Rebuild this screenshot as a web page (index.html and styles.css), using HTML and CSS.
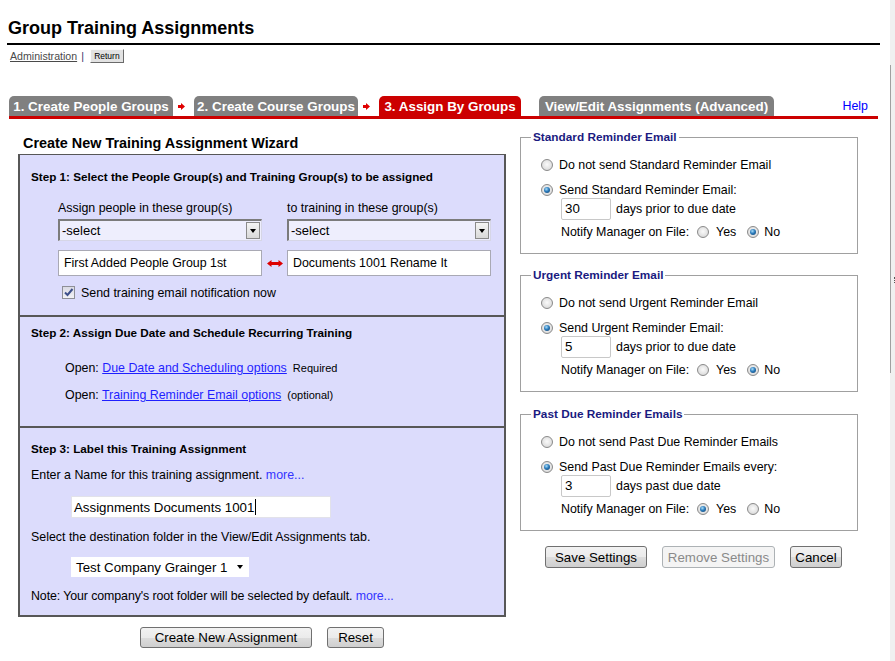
FILE: index.html
```html
<!DOCTYPE html>
<html>
<head>
<meta charset="utf-8">
<title>Group Training Assignments</title>
<link rel="stylesheet" href="styles.css">
</head>
<body>
<div class="main">
  <h1 class="title">Group Training Assignments</h1>
  <div class="admin">
    <a class="admin-link">Administration</a><span class="sep">|</span>
    <button class="return">Return</button>
  </div>

  <div class="tabs">
    <div class="tab w1">1. Create People Groups</div>
    <svg class="arrow" width="7" height="7" viewBox="0 0 7 7"><path d="M0 2h3V0l4 3.5L3 7V5H0z" fill="#e00000"/></svg>
    <div class="tab w2">2. Create Course Groups</div>
    <svg class="arrow" width="7" height="7" viewBox="0 0 7 7"><path d="M0 2h3V0l4 3.5L3 7V5H0z" fill="#e00000"/></svg>
    <div class="tab active w3">3. Assign By Groups</div>
    <div class="tab w4">View/Edit Assignments (Advanced)</div>
    <a class="help">Help</a>
  </div>

  <div class="content">
    <div class="left">
      <div class="wiz-title">Create New Training Assignment Wizard</div>
      <div class="box">
        <div class="step step1">
          <div class="step-title">Step 1: Select the People Group(s) and Training Group(s) to be assigned</div>
          <div class="pair pair-labels">
            <div>Assign people in these group(s)</div><div></div><div>to training in these group(s)</div>
          </div>
          <div class="pair pair-selects">
            <div class="sel"><span>-select</span><span class="sel-btn"><span class="tri"></span></span></div>
            <div></div>
            <div class="sel"><span>-select</span><span class="sel-btn"><span class="tri"></span></span></div>
          </div>
          <div class="pair pair-fields">
            <div class="field">First Added People Group 1st</div>
            <div class="dbl"><svg width="16" height="7" viewBox="0 0 16 7"><path d="M0 3.5L4.5 0v2h7V0L16 3.5 11.5 7V5h-7v2z" fill="#dd0000"/></svg></div>
            <div class="field">Documents 1001 Rename It</div>
          </div>
          <div class="chk-row">
            <span class="chk"><svg width="11" height="11" viewBox="0 0 11 11"><path d="M2 5.5l2.5 2.5L9.5 2" fill="none" stroke="#3d4f8a" stroke-width="2"/></svg></span>
            <span class="chk-text">Send training email notification now</span>
          </div>
        </div>

        <div class="step step2">
          <div class="step-title">Step 2: Assign Due Date and Schedule Recurring Training</div>
          <div class="open-row first">Open: <a class="link">Due Date and Scheduling options</a><span class="small">Required</span></div>
          <div class="open-row">Open: <a class="link">Training Reminder Email options</a><span class="small">(optional)</span></div>
        </div>

        <div class="step step3">
          <div class="step-title">Step 3: Label this Training Assignment</div>
          <div class="txt">Enter a Name for this training assignment. <a class="more">more...</a></div>
          <div class="name-input"><span>Assignments Documents 1001</span><span class="caret"></span></div>
          <div class="txt">Select the destination folder in the View/Edit Assignments tab.</div>
          <div class="dest"><span>Test Company Grainger 1</span><span class="tri"></span></div>
          <div class="txt note">Note: Your company's root folder will be selected by default. <a class="more">more...</a></div>
        </div>
      </div>
      <div class="btn-row">
        <button class="btn b-create">Create New Assignment</button>
        <button class="btn b-reset">Reset</button>
      </div>
    </div>

    <div class="right">
      <fieldset class="fs">
        <legend>Standard Reminder Email</legend>
        <div class="opt opt1"><span class="radio"></span><span>Do not send Standard Reminder Email</span></div>
        <div class="opt opt2"><span class="radio on"></span><span>Send Standard Reminder Email:</span></div>
        <div class="days"><span class="num">30</span><span>days prior to due date</span></div>
        <div class="notify"><span>Notify Manager on File:</span><span class="radio r-yes"></span><span class="r-lbl">Yes</span><span class="radio on r-no"></span><span class="r-lbl2">No</span></div>
      </fieldset>
      <fieldset class="fs fs2">
        <legend>Urgent Reminder Email</legend>
        <div class="opt opt1"><span class="radio"></span><span>Do not send Urgent Reminder Email</span></div>
        <div class="opt opt2"><span class="radio on"></span><span>Send Urgent Reminder Email:</span></div>
        <div class="days"><span class="num">5</span><span>days prior to due date</span></div>
        <div class="notify"><span>Notify Manager on File:</span><span class="radio r-yes"></span><span class="r-lbl">Yes</span><span class="radio on r-no"></span><span class="r-lbl2">No</span></div>
      </fieldset>
      <fieldset class="fs fs3">
        <legend>Past Due Reminder Emails</legend>
        <div class="opt opt1"><span class="radio"></span><span>Do not send Past Due Reminder Emails</span></div>
        <div class="opt opt2"><span class="radio on"></span><span>Send Past Due Reminder Emails every:</span></div>
        <div class="days"><span class="num">3</span><span>days past due date</span></div>
        <div class="notify"><span>Notify Manager on File:</span><span class="radio on r-yes"></span><span class="r-lbl">Yes</span><span class="radio r-no"></span><span class="r-lbl2">No</span></div>
      </fieldset>
      <div class="rbtns">
        <button class="btn b-save">Save Settings</button>
        <button class="btn b-remove" disabled>Remove Settings</button>
        <button class="btn b-cancel">Cancel</button>
      </div>
    </div>
  </div>
</div>
<div class="edge">
  <div class="edge-line"><span class="grip"></span></div>
</div>
</body>
</html>
```
FILE: styles.css
```css
html, body {
  margin: 0;
  padding: 0;
}
body {
  display: flex;
  height: 661px;
  overflow: hidden;
  background: #fff;
  color: #000;
  font-family: "Liberation Sans", Arial, sans-serif;
  font-size: 12.4px;
}
.main {
  flex: none;
  width: 890px;
  padding-left: 7px;
  box-sizing: border-box;
}
.title {
  margin: 0;
  width: 873px;
  box-sizing: border-box;
  padding: 17px 0 4px 1px;
  font-size: 18px;
  line-height: 22px;
  font-weight: bold;
  border-bottom: 2px solid #000;
}
.admin {
  display: flex;
  align-items: center;
  height: 14px;
  margin-top: 4px;
  padding-left: 3px;
  font-size: 10.6px;
}
.admin-link {
  color: #4a4a4a;
  text-decoration: underline;
}
.sep {
  margin-left: 4px;
  color: #333366;
}
.return {
  margin-left: 6px;
  width: 34px;
  height: 14px;
  padding: 0;
  font-family: "Liberation Sans", Arial, sans-serif;
  font-size: 8.5px;
  color: #000;
  background: #e2e2e2;
  border: 1px solid;
  border-color: #fbfbfb #6a6a6a #6a6a6a #fbfbfb;
}
.tabs {
  display: flex;
  align-items: flex-end;
  margin: 33px 0 0 2px;
  width: 869px;
  height: 20px;
  border-bottom: 3px solid #cc0000;
}
.tab {
  height: 19px;
  padding-top: 1px;
  line-height: 19px;
  background: #808080;
  color: #fff;
  font-weight: bold;
  font-size: 13.4px;
  text-align: center;
  white-space: nowrap;
  border-radius: 5px 5px 0 0;
}
.w1 { width: 164px; }
.w2 { width: 164px; }
.w3 { width: 142px; }
.w4 { width: 235px; margin-left: 18px; }
.active { background: #cc0000; }
.arrow {
  align-self: center;
  margin: 1px 9px 0 5px;
}
.help {
  margin-left: auto;
  margin-right: 10px;
  color: #0000ff;
  line-height: 20px;
  padding-top: 1px;
}
.content {
  display: flex;
  align-items: flex-start;
  margin-top: 11px;
}
.left {
  width: 488px;
  margin-left: 11px;
}
.right {
  width: 338px;
  margin-left: 14px;
}
.wiz-title {
  margin: 5px 0 3px;
  padding-left: 5px;
  font-weight: bold;
  font-size: 14.4px;
  line-height: 16px;
}
.box {
  background: #dcdcfc;
  border: 2px solid #575757;
  border-top-width: 1px;
}
.step + .step {
  border-top: 2px solid #575757;
}
.step-title {
  font-weight: bold;
  font-size: 11.7px;
  line-height: 14px;
  padding-left: 11px;
}
.step1 { padding-bottom: 16px; }
.step1 .step-title { padding-top: 15px; }
.pair {
  display: grid;
  grid-template-columns: 204px 25px 204px;
  margin-left: 38px;
}
.pair-labels {
  margin-top: 17px;
  line-height: 14px;
}
.pair-selects { margin-top: 4px; }
.pair-fields { margin-top: 9px; }
.sel {
  height: 22px;
  box-sizing: border-box;
  border-style: solid;
  border-width: 2px 1px 1px 2px;
  border-color: #7b7b7b #d6d6e6 #d6d6e6 #7b7b7b;
  background: #eeeefd;
  display: flex;
  align-items: center;
  justify-content: space-between;
  padding-left: 2px;
  font-size: 13px;
}
.sel-btn {
  width: 14px;
  height: 17px;
  margin-right: 1px;
  box-sizing: border-box;
  border: 1px solid #8a8a8a;
  background: linear-gradient(#f4f4f4, #d9d9d9);
  display: flex;
  align-items: center;
  justify-content: center;
}
.tri {
  width: 0;
  height: 0;
  border-left: 3.5px solid transparent;
  border-right: 3.5px solid transparent;
  border-top: 4px solid #000;
}
.field {
  height: 26px;
  box-sizing: border-box;
  background: #fff;
  border: 1px solid #a9a9b4;
  padding-left: 5px;
  display: flex;
  align-items: center;
}
.dbl {
  display: flex;
  align-items: center;
  justify-content: center;
  padding-top: 1px;
}
.chk-row {
  display: flex;
  align-items: center;
  height: 13px;
  margin: 10px 0 0 42px;
}
.chk {
  width: 13px;
  height: 13px;
  box-sizing: border-box;
  border: 1px solid #8e8f96;
  background: linear-gradient(#dadae4, #f2f2f6);
  display: flex;
  align-items: center;
  justify-content: center;
}
.chk-text { margin-left: 6px; }
.step2 { padding-bottom: 24px; }
.step2 .step-title { padding-top: 9px; }
.open-row {
  margin: 13px 0 0 45px;
  line-height: 14px;
}
.open-row.first { margin-top: 21px; }
.link {
  color: #1f1fff;
  text-decoration: underline;
}
.small {
  font-size: 11px;
  margin-left: 6px;
}
.step3 { padding-bottom: 12px; }
.step3 .step-title { padding-top: 14px; }
.txt {
  padding-left: 11px;
  margin-top: 12px;
  line-height: 14px;
}
.note { letter-spacing: -0.1px; }
.more {
  color: #3333ff;
}
.name-input {
  margin: 14px 0 0 51px;
  width: 260px;
  height: 22px;
  box-sizing: border-box;
  background: #fff;
  border: 1px solid #e2e2ea;
  padding-left: 2px;
  display: flex;
  align-items: center;
  font-size: 13.3px;
}
.caret {
  width: 1px;
  height: 16px;
  background: #000;
  margin-left: 1px;
}
.dest {
  margin: 13px 0 0 51px;
  width: 178px;
  height: 20px;
  box-sizing: border-box;
  background: #fff;
  padding: 0 6px 0 5px;
  display: flex;
  align-items: center;
  justify-content: space-between;
  font-size: 13.3px;
}
.btn-row {
  display: flex;
  justify-content: center;
  gap: 15px;
  margin-top: 10px;
}
.btn {
  height: 21px;
  padding: 0;
  font-family: "Liberation Sans", Arial, sans-serif;
  font-size: 13.3px;
  color: #000;
  border: 1px solid #707070;
  border-radius: 3px;
  background: linear-gradient(#f2f2f2 0%, #ebebeb 50%, #dddddd 51%, #cfcfcf 100%);
}
.b-create { width: 172px; }
.b-reset { width: 57px; }
.fs {
  margin: 0;
  padding: 0 0 12px 0;
  border: 1px solid #a0a0a0;
  min-width: 0;
}
.fs legend {
  margin-left: 10px;
  padding: 0 2px;
  font-weight: bold;
  font-size: 11.8px;
  line-height: 14px;
  color: #1a1a80;
}
.fs2 { margin-top: 14px; }
.fs3 { margin-top: 15px; }
.fs > div { margin-left: 20px; }
.opt {
  display: flex;
  align-items: center;
  gap: 6px;
  line-height: 16px;
}
.opt1 { margin-top: 13px; }
.opt2 { margin-top: 9px; }
.days {
  display: flex;
  align-items: center;
  gap: 5px;
  padding-left: 20px;
  height: 22px;
}
.num {
  width: 50px;
  height: 22px;
  box-sizing: border-box;
  border: 1px solid #c8c8c8;
  border-radius: 2px;
  background: #fff;
  padding-left: 3px;
  line-height: 20px;
  font-size: 13.3px;
}
.notify {
  display: flex;
  align-items: center;
  padding-left: 20px;
  margin-top: 3px;
  line-height: 18px;
}
.radio {
  flex: none;
  width: 12px;
  height: 12px;
  box-sizing: border-box;
  border-radius: 50%;
  border: 1px solid #8a8a8a;
  background: radial-gradient(circle at 50% 45%, #fafafa 0, #e4e4e4 55%, #cdcdcd 100%);
  display: inline-flex;
  align-items: center;
  justify-content: center;
}
.radio.on::after {
  content: "";
  width: 6px;
  height: 6px;
  border-radius: 50%;
  background: radial-gradient(circle at 40% 35%, #a9defa 0, #2b7bbb 45%, #0f3a66 100%);
}
.r-yes { margin-left: 8px; }
.r-lbl { margin-left: 7px; }
.r-no { margin-left: 11px; }
.r-lbl2 { margin-left: 5px; }
.rbtns {
  display: flex;
  gap: 15px;
  margin: 15px 0 0 25px;
}
.rbtns .btn { height: 22px; }
.b-save { width: 102px; }
.b-remove {
  width: 113px;
  color: #8a8a8a;
  border-color: #adb2b5;
  background: #f4f4f4;
}
.b-cancel { width: 52px; }
.edge {
  flex: none;
  width: 5px;
  background: #f0f0f0;
}
.edge-line {
  margin-top: 65px;
  height: 308px;
  border-left: 1px solid #a0a0a0;
  box-sizing: border-box;
  padding: 212px 0 0 3px;
}
.grip {
  display: block;
  width: 0;
  height: 6px;
  border-left: 1px dotted #555;
}
```
